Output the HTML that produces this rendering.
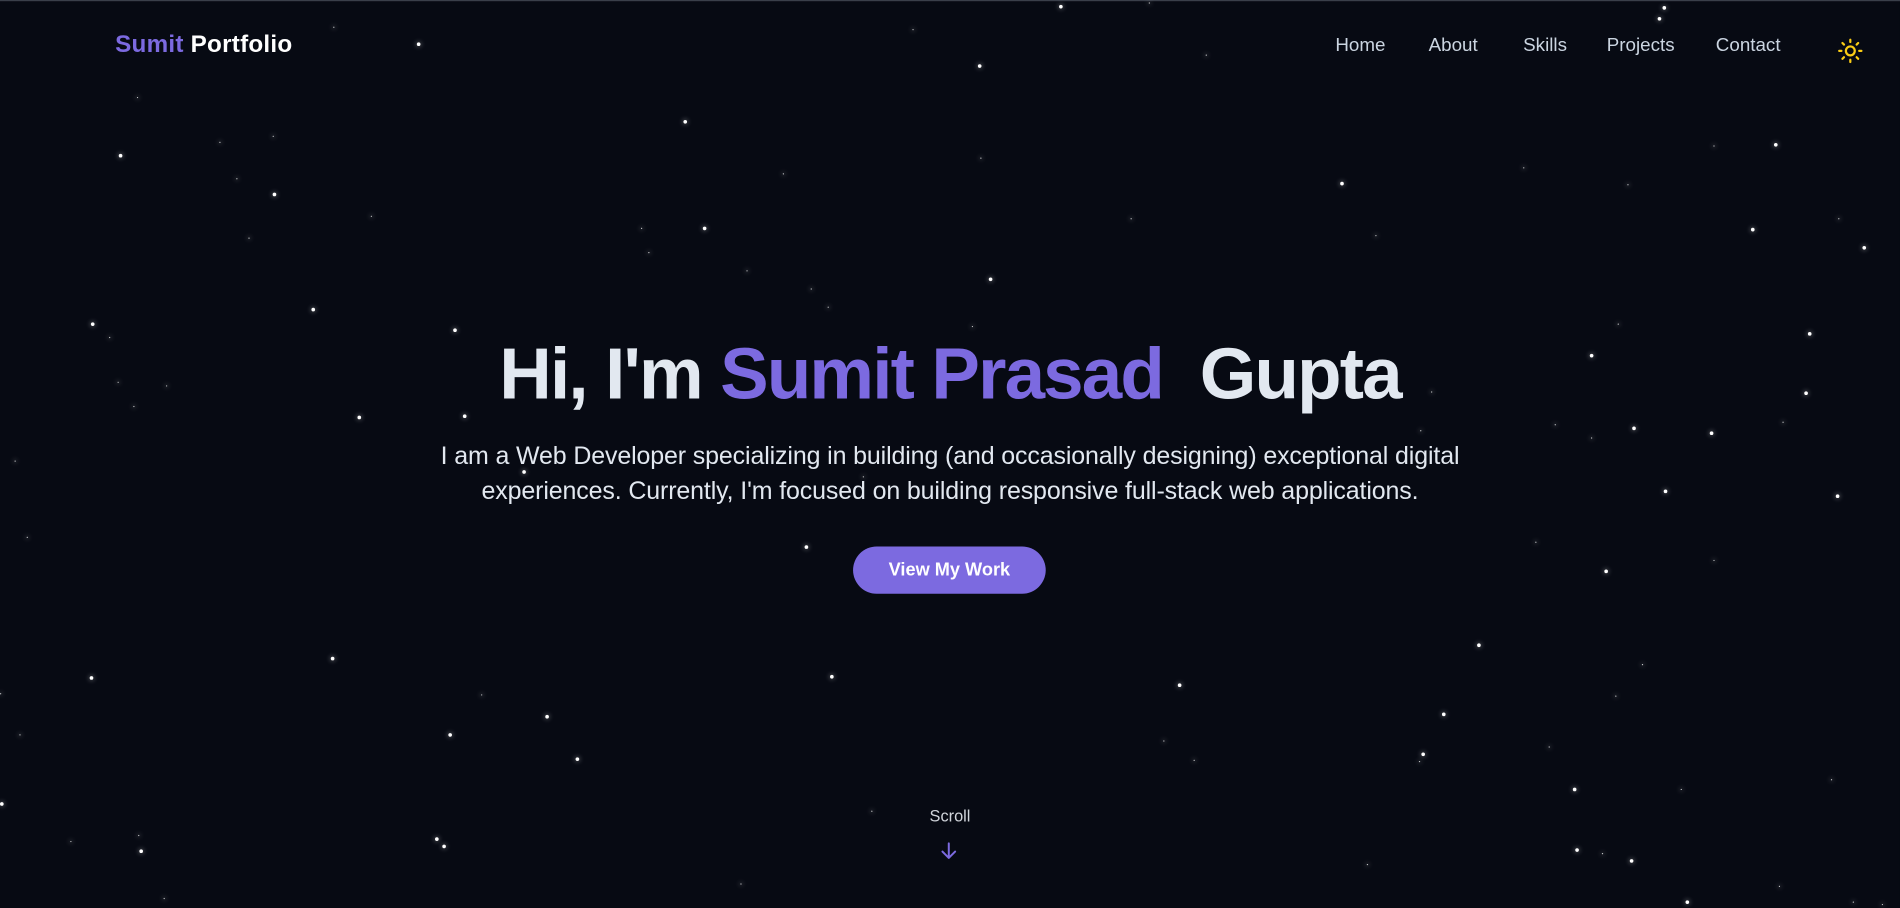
<!DOCTYPE html>
<html><head><meta charset="utf-8"><style>
html,body{margin:0;padding:0;width:1900px;height:908px;overflow:hidden;background:#070a13;}
#s{position:absolute;left:0;top:0;width:1568px;height:749px;transform:scale(1.21173);transform-origin:0 0;font-family:"Liberation Sans",sans-serif;background:#070a13;border-top:1px solid #3a3f4a;box-sizing:border-box}
.st{position:absolute;width:2px;height:2px;border-radius:50%;background:#fff;box-shadow:0 0 4px 1px rgba(255,255,255,.25)}
.b{width:3px;height:3px}
.sm{width:1.3px;height:1.3px;opacity:.8}
.logo{position:absolute;left:95px;top:25px;font-size:20px;font-weight:bold;color:#fff;letter-spacing:.2px}
.logo span{color:#7c6ae0}
.nav{position:absolute;top:28px;font-size:15.5px;color:#cbd5e1}
h1{position:absolute;left:0;width:1568px;top:273px;margin:0;text-align:center;font-size:60px;font-weight:bold;color:#e2e8f0;letter-spacing:-1.5px;line-height:70px}
h1 span{color:#7c6ae0}
p{position:absolute;left:0;width:1568px;top:361px;margin:0;text-align:center;color:#e2e8f0;font-size:20.6px;line-height:29px;letter-spacing:-.1px}
.btn{position:absolute;left:704px;top:450px;width:159px;height:39px;border-radius:20px;background:#7c6ae0;color:#fff;font-size:15px;font-weight:bold;text-align:center;line-height:39px}
.scroll{position:absolute;left:734px;width:100px;text-align:center;top:665px;font-size:13.5px;color:#d1d5db}
</style></head><body><div id="s">
<div class="logo"><span>Sumit</span> Portfolio</div>
<div class="nav" style="left:1102px">Home</div>
<div class="nav" style="left:1179px">About</div>
<div class="nav" style="left:1257px">Skills</div>
<div class="nav" style="left:1326px">Projects</div>
<div class="nav" style="left:1416px">Contact</div>
<svg style="position:absolute;left:1516px;top:30px" width="22" height="22" viewBox="0 0 24 24" fill="none" stroke="#facc15" stroke-width="2" stroke-linecap="round"><circle cx="12" cy="12" r="4"/><path d="M12 2v2M12 20v2M4.9 4.9l1.4 1.4M17.7 17.7l1.4 1.4M2 12h2M20 12h2M4.9 19.1l1.4-1.4M17.7 6.3l1.4-1.4"/></svg>
<h1>Hi, I'm <span>Sumit Prasad</span>&nbsp; Gupta</h1>
<p>I am a Web Developer specializing in building (and occasionally designing) exceptional digital<br>experiences. Currently, I'm focused on building responsive full-stack web applications.</p>
<div class="btn">View My Work</div>
<div class="scroll">Scroll</div>
<svg style="position:absolute;left:774px;top:692px" width="18" height="18" viewBox="0 0 24 24" fill="none" stroke="#7c6ae0" stroke-width="2.2" stroke-linecap="round" stroke-linejoin="round"><path d="M12 4v16M5 13l7 7 7-7"/></svg>
<div id="stars"></div>
</div>
<script>
var p=[[875,4,1],[949,2,0],[1373,5,1],[1369,14,1],[276,22,0],[754,24,0],[345,35,1],[996,45,0],[808,53,1],[114,80,0],[565,99,1],[226,112,0],[182,117,0],[99,127,1],[810,130,0],[1415,120,0],[1465,118,1],[1258,138,0],[647,143,0],[196,147,0],[1107,150,1],[1344,152,0],[226,159,1],[307,178,0],[934,180,0],[1518,180,0],[530,188,0],[581,187,1],[1446,188,1],[1136,194,0],[206,196,0],[1538,203,1],[536,208,0],[617,223,0],[817,229,1],[670,238,0],[258,254,1],[684,253,0],[76,266,1],[375,271,1],[1336,267,0],[803,269,0],[1493,274,1],[91,278,0],[1313,292,1],[98,315,0],[138,318,0],[1490,323,1],[1182,323,0],[111,335,0],[296,343,1],[383,342,1],[1472,348,0],[1284,350,0],[1348,352,1],[1412,356,1],[1314,361,0],[1173,355,0],[13,380,0],[432,388,1],[713,393,0],[1374,404,1],[1516,408,1],[23,443,0],[665,450,1],[1268,447,0],[1415,462,0],[1325,470,1],[1220,531,1],[1356,548,0],[274,542,1],[75,558,1],[686,557,1],[973,564,1],[1334,574,0],[398,573,0],[1,572,0],[451,590,1],[1191,588,1],[17,606,0],[371,605,1],[961,611,0],[1279,616,0],[1174,621,1],[476,625,1],[986,627,0],[1172,628,0],[1512,643,0],[1299,650,1],[1388,651,0],[1,662,1],[720,669,0],[115,689,0],[360,691,1],[366,697,1],[59,694,0],[116,701,1],[1301,700,1],[1323,704,0],[1346,709,1],[1129,713,0],[612,729,0],[1469,731,0],[136,741,0],[1392,743,1],[1530,744,0],[1554,746,0]];
var h='';p.forEach(function(a){h+='<div class="st '+(a[2]?'b':'sm')+'" style="left:'+(a[0]-1)+'px;top:'+(a[1]-1)+'px"></div>';});
document.getElementById('stars').innerHTML=h;
</script>
</body></html>
